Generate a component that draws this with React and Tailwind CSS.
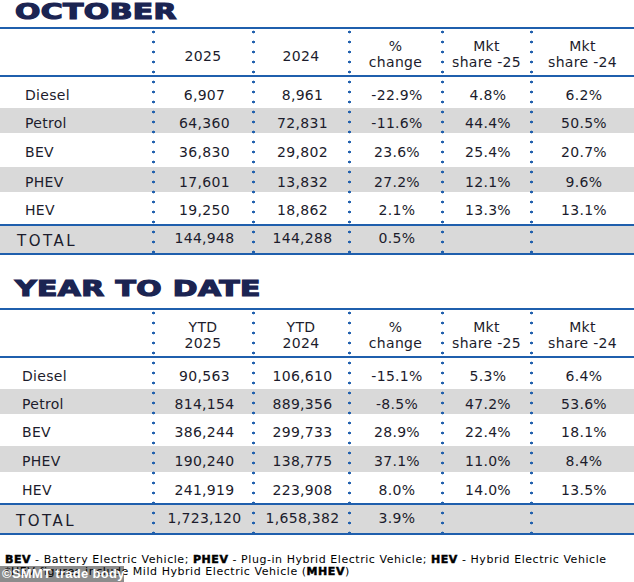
import React from "react";

const W = ["w-[153px]", "w-[100px]", "w-[96px]", "w-[93px]", "w-[89px]", "flex-1"];

const october = {
    heads: [["2025"], ["2024"], ["%", "change"], ["Mkt", "share -25"], ["Mkt", "share -24"]],
    rows: [
        ["Diesel", "6,907", "8,961", "-22.9%", "4.8%", "6.2%"],
        ["Petrol", "64,360", "72,831", "-11.6%", "44.4%", "50.5%"],
        ["BEV", "36,830", "29,802", "23.6%", "25.4%", "20.7%"],
        ["PHEV", "17,601", "13,832", "27.2%", "12.1%", "9.6%"],
        ["HEV", "19,250", "18,862", "2.1%", "13.3%", "13.1%"],
    ],
    heights: ["h-[31px]", "h-[25px]", "h-[34px]", "h-[25px]", "h-[32px]"],
    total: ["144,948", "144,288", "0.5%", "", ""],
    totalH: "h-[27px]",
    labelPad: "pl-[25px]",
    totalPad: "pl-[17px]",
};

const ytd = {
    heads: [["YTD", "2025"], ["YTD", "2024"], ["%", "change"], ["Mkt", "share -25"], ["Mkt", "share -24"]],
    rows: [
        ["Diesel", "90,563", "106,610", "-15.1%", "5.3%", "6.4%"],
        ["Petrol", "814,154", "889,356", "-8.5%", "47.2%", "53.6%"],
        ["BEV", "386,244", "299,733", "28.9%", "22.4%", "18.1%"],
        ["PHEV", "190,240", "138,775", "37.1%", "11.0%", "8.4%"],
        ["HEV", "241,919", "223,908", "8.0%", "14.0%", "13.5%"],
    ],
    heights: ["h-[31px]", "h-[25px]", "h-[32px]", "h-[26px]", "h-[31px]"],
    total: ["1,723,120", "1,658,382", "3.9%", "", ""],
    totalH: "h-[28px]",
    labelPad: "pl-[22px]",
    totalPad: "pl-[16px]",
};

function Line() {
    return <div className="h-[2px] bg-[#1f5fad]" />;
}

function Dots() {
    // dotted column dividers laid over the rows
    return (
        <div className="absolute inset-0 flex pointer-events-none">
            {W.slice(0, 5).map((w, i) => (
                <div key={i} className={`${w} shrink-0 relative`}>
                    {i > 0 && (
                        <div className="absolute top-0 bottom-0 left-[-1.5px] w-[3px] bg-[radial-gradient(circle,#1f5fad_1.1px,transparent_1.7px)] bg-[length:3px_10px]" />
                    )}
                </div>
            ))}
            <div className="relative flex-1">
                <div className="absolute top-0 bottom-0 left-[-1.5px] w-[3px] bg-[radial-gradient(circle,#1f5fad_1.1px,transparent_1.7px)] bg-[length:3px_10px]" />
            </div>
        </div>
    );
}

function Table({ data }) {
    return (
        <div className="relative">
            <Line />
            <div className="flex h-[46px]">
                <div className={W[0]} />
                {data.heads.map((h, i) => (
                    <div key={i} className={`${W[i + 1]} shrink-0 flex flex-col items-center justify-center leading-[16px] ${h.length === 1 ? "pt-[7px]" : "pt-[3px]"}`}>
                        {h.map((t, j) => (
                            <span key={j}>{t}</span>
                        ))}
                    </div>
                ))}
            </div>
            <Line />
            {data.rows.map((r, ri) => (
                <div key={ri} className={`flex ${data.heights[ri]} ${ri % 2 === 1 ? "bg-[#d9d9d9]" : ""}`}>
                    {r.map((c, ci) => (
                        <div
                            key={ci}
                            className={`${W[ci]} shrink-0 flex items-center pt-[5px] ${ci === 0 ? data.labelPad : "justify-center pl-[3px]"}`}
                        >
                            {c}
                        </div>
                    ))}
                </div>
            ))}
            <Line />
            <div className={`flex ${data.totalH} bg-[#d9d9d9]`}>
                <div className={`${W[0]} shrink-0 flex items-center pt-[4px] ${data.totalPad} text-[15px] tracking-[2.5px]`}>TOTAL</div>
                {data.total.map((c, ci) => (
                    <div key={ci} className={`${W[ci + 1]} shrink-0 flex items-center justify-center pl-[3px] pb-[2px]`}>
                        {c}
                    </div>
                ))}
            </div>
            <Line />
            <Dots />
        </div>
    );
}

function Title({ children, pad }) {
    return (
        <div className={`${pad} pl-[15px]`}>
            <span className="inline-block origin-left scale-x-[1.42] text-[21px] leading-[21px] font-bold text-[#1b2452] [-webkit-text-stroke:1.2px_#1b2452]">
                {children}
            </span>
        </div>
    );
}

export default function App() {
    return (
        <div className="relative w-[634px] h-[582px] overflow-hidden bg-white font-['DejaVu_Sans',sans-serif] text-[14px] tracking-[0.3px] text-[#1c1c2c]">
            <Title pad="h-[27px] pt-[2px]">OCTOBER</Title>
            <Table data={october} />
            <Title pad="h-[53px] pt-[24px]">YEAR TO DATE</Title>
            <Table data={ytd} />
            <div className="mt-[19px] pl-[5px] text-[11px] leading-[12px] tracking-[0.55px] text-black whitespace-nowrap">
                <p>
                    <b className="[-webkit-text-stroke:0.5px_black]">BEV</b> - Battery Electric Vehicle; <b className="[-webkit-text-stroke:0.5px_black]">PHEV</b> - Plug-in Hybrid Electric Vehicle; <b className="[-webkit-text-stroke:0.5px_black]">HEV</b> - Hybrid Electric Vehicle
                </p>
                <p>
                    *HEV figures include Mild Hybrid Electric Vehicle (<b className="[-webkit-text-stroke:0.5px_black]">MHEV</b>)
                </p>
            </div>
            <div className="absolute left-0 bottom-0 w-[124px] h-[16px] bg-black/45 text-white text-[13px] font-bold leading-[16px] pl-[2px] whitespace-nowrap font-['Liberation_Sans',sans-serif]">
                ©SMMT trade body
            </div>
        </div>
    );
}
